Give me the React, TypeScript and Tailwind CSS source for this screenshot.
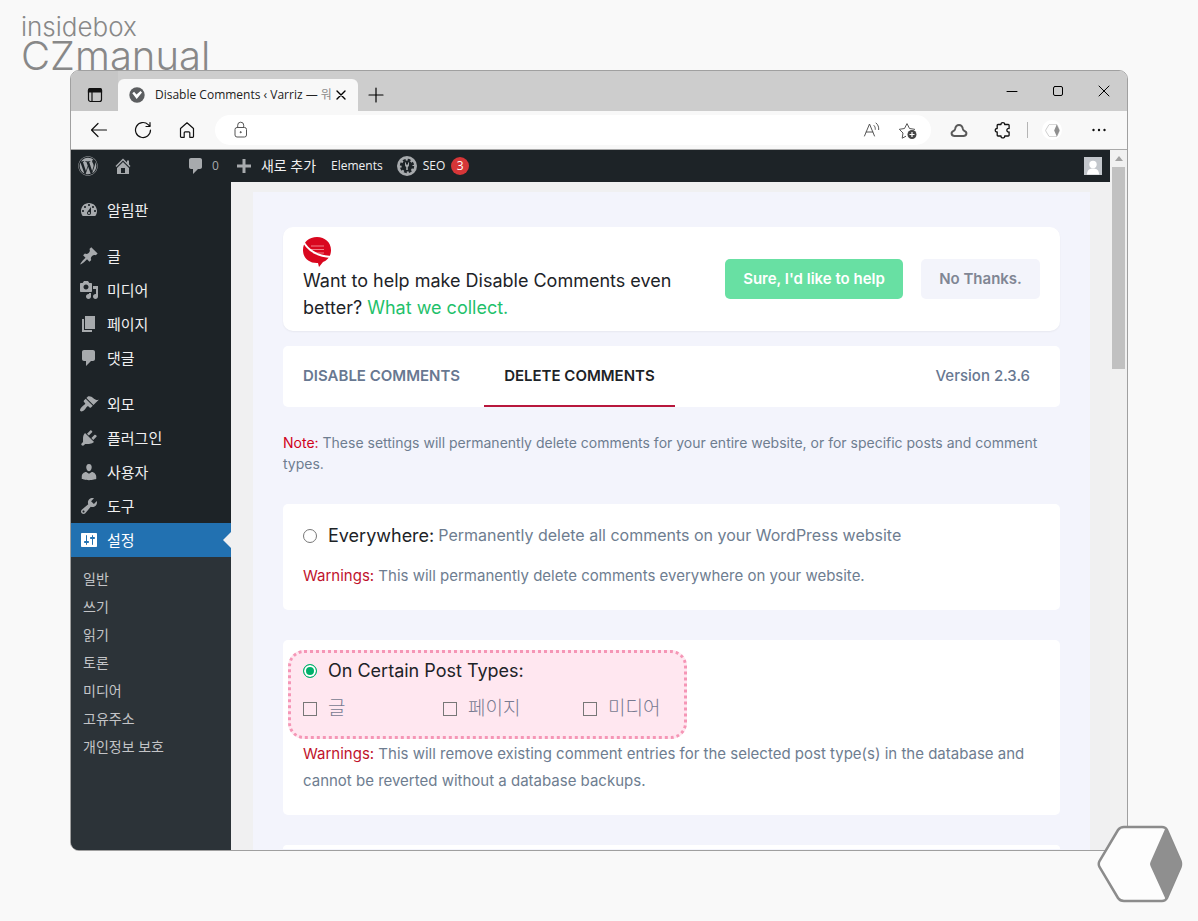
import React, { useState } from "react";
import { FaWordpress } from "react-icons/fa";

// 20x20 admin menu glyphs
const icons = {
  dashboard:
    "M3.76 16h12.48c1.1-1.37 1.76-3.11 1.76-5 0-4.42-3.58-8-8-8s-8 3.58-8 8c0 1.89.66 3.63 1.76 5zM10 4c.55 0 1 .45 1 1s-.45 1-1 1-1-.45-1-1 .45-1 1-1zM6 6c.55 0 1 .45 1 1s-.45 1-1 1-1-.45-1-1 .45-1 1-1zm8 0c.55 0 1 .45 1 1s-.45 1-1 1-1-.45-1-1 .45-1 1-1zm-5.37 5.55L12 7v6c0 1.1-.9 2-2 2s-2-.9-2-2c0-.57.24-1.08.63-1.45zM4 10c.55 0 1 .45 1 1s-.45 1-1 1-1-.45-1-1 .45-1 1-1zm12 0c.55 0 1 .45 1 1s-.45 1-1 1-1-.45-1-1 .45-1 1-1zm-5 3c0-.55-.45-1-1-1s-1 .45-1 1 .45 1 1 1 1-.45 1-1z",
  post: "M10.44 3.02l1.82-1.82 6.36 6.35-1.83 1.82c-1.05-.68-2.48-.57-3.41.36l-.75.75c-.92.93-1.04 2.35-.35 3.41l-1.83 1.82-2.41-2.41-2.8 2.79c-.42.42-3.38 2.71-3.8 2.29s1.86-3.39 2.28-3.81l2.79-2.79L4.1 9.36l1.83-1.82c1.05.69 2.48.57 3.4-.36l.75-.75c.93-.92 1.05-2.35.36-3.41z",
  media:
    "M13 11V4c0-.55-.45-1-1-1h-1.67L9 1H5L3.67 3H2c-.55 0-1 .45-1 1v7c0 .55.45 1 1 1h10c.55 0 1-.45 1-1zM7 4.5c1.38 0 2.5 1.12 2.5 2.5S8.38 9.5 7 9.5 4.5 8.38 4.5 7 5.62 4.5 7 4.5zM14 6h5v10.5c0 1.38-1.12 2.5-2.5 2.5S14 17.88 14 16.5s1.12-2.5 2.5-2.5c.17 0 .34.02.5.05V9h-3V6zm-4 8.05V13h2v3.5c0 1.38-1.12 2.5-2.5 2.5S7 17.88 7 16.5 8.12 14 9.5 14c.17 0 .34.02.5.05z",
  page: "M6 15V2h10v13H6zm-1 1h8v2H3V5h2v11z",
  comments:
    "M5 2h9c1.1 0 2 .9 2 2v7c0 1.1-.9 2-2 2h-2l-5 5v-5H5c-1.1 0-2-.9-2-2V4c0-1.1.9-2 2-2z",
  appearance:
    "M14.48 11.06L7.41 3.99l1.5-1.5c.5-.56 2.3-.47 3.51.32 1.21.8 1.43 1.28 2.91 2.1 1.18.64 2.45 1.26 4.45.85zm-.71.71L6.7 4.7 4.93 6.47c-.39.39-.39 1.02 0 1.41l1.06 1.06c.39.39.39 1.03 0 1.42-.6.6-1.43 1.11-2.21 1.69-.35.26-.7.53-1.01.84C1.43 14.23.4 16.08 1.4 17.07c.99 1 2.84-.03 4.18-1.36.31-.31.58-.66.85-1.02.57-.78 1.08-1.61 1.69-2.21.39-.39 1.02-.39 1.41 0l1.06 1.06c.39.39 1.02.39 1.41 0z",
  plugins:
    "M13.11 4.36L9.87 7.6 8 5.73l3.24-3.24c.35-.34 1.05-.2 1.56.32.52.51.66 1.21.31 1.55zm-8 1.77l.91-1.12 9.01 9.01-1.19.84c-.71.71-2.63 1.16-3.82 1.16H6.14L4.9 17.26c-.59.59-1.54.59-2.12 0-.59-.58-.59-1.53 0-2.12l1.24-1.24v-3.88c0-1.13.4-3.19 1.09-3.89zm7.26 3.97l3.24-3.24c.34-.35 1.04-.21 1.55.31.52.51.66 1.21.31 1.55l-3.24 3.25z",
  users:
    "M10 9.25c-2.27 0-2.73-3.44-2.73-3.44C7 4.02 7.82 2 9.97 2c2.16 0 2.98 2.02 2.71 3.81 0 0-.41 3.44-2.68 3.44zm0 2.57L12.72 10c2.39 0 4.52 2.33 4.52 4.53v2.49s-3.65 1.13-7.24 1.13c-3.65 0-7.24-1.13-7.24-1.13v-2.49c0-2.25 1.94-4.48 4.47-4.48z",
  tools:
    "M16.68 9.77c-1.34 1.34-3.3 1.67-4.95.99l-5.41 6.52c-.99.99-2.59.99-3.58 0s-.99-2.59 0-3.57l6.52-5.42c-.68-1.65-.35-3.61.99-4.95 1.28-1.28 3.12-1.62 4.72-1.06l-2.89 2.89 2.82 2.82 2.86-2.87c.53 1.58.18 3.39-1.08 4.65zM3.81 16.21c.4.39 1.04.39 1.43 0 .4-.4.4-1.04 0-1.43-.39-.4-1.03-.4-1.43 0-.39.39-.39 1.03 0 1.43z",
  settings:
    "M18 16V4c0-.55-.45-1-1-1H3c-.55 0-1 .45-1 1v12c0 .55.45 1 1 1h14c.55 0 1-.45 1-1zM8 11h1c.55 0 1 .45 1 1s-.45 1-1 1H8v1.5c0 .28-.22.5-.5.5s-.5-.22-.5-.5V13H6c-.55 0-1-.45-1-1s.45-1 1-1h1V5.5c0-.28.22-.5.5-.5s.5.22.5.5V11zm5-2h-1c-.55 0-1-.45-1-1s.45-1 1-1h1V5.5c0-.28.22-.5.5-.5s.5.22.5.5V7h1c.55 0 1 .45 1 1s-.45 1-1 1h-1v5.5c0 .28-.22.5-.5.5s-.5-.22-.5-.5V9z",
  home: "M16 8.5l1.53 1.53-1.06 1.06L10 4.6l-6.47 6.49-1.06-1.06L10 2.5l4 4v-2h2v4zm-6-2.46l6 5.99V18H4v-5.97zM12 17v-5H8v5h4z",
  plus: "M17 8.5v3h-5.5V17h-3v-5.500H3v-3h5.500V3h3v5.500H17z",
};

type IconName = keyof typeof icons;

const DashIcon = ({ name, size = 20 }: { name: IconName; size?: number }) => (
  <svg width={size} height={size} viewBox="0 0 20 20" fill="currentColor" className="shrink-0">
    <path fillRule={name === "home" ? "evenodd" : "nonzero"} d={icons[name]} />
  </svg>
);

const menuGroups: { icon: IconName; label: string }[][] = [
  [{ icon: "dashboard", label: "알림판" }],
  [
    { icon: "post", label: "글" },
    { icon: "media", label: "미디어" },
    { icon: "page", label: "페이지" },
    { icon: "comments", label: "댓글" },
  ],
  [
    { icon: "appearance", label: "외모" },
    { icon: "plugins", label: "플러그인" },
    { icon: "users", label: "사용자" },
    { icon: "tools", label: "도구" },
    { icon: "settings", label: "설정" },
  ],
];

const settingsMenu = ["일반", "쓰기", "읽기", "토론", "미디어", "고유주소", "개인정보 보호"];

const postTypes = ["글", "페이지", "미디어"];

const Line = ({ size, width = 1, children }: { size: number; width?: number; children: React.ReactNode }) => (
  <svg
    width={size}
    height={size}
    viewBox={`0 0 ${size} ${size}`}
    fill="none"
    stroke="currentColor"
    strokeWidth={width}
    strokeLinecap="round"
    strokeLinejoin="round"
  >
    {children}
  </svg>
);

const HexMark = ({ className }: { className: string }) => (
  <svg viewBox="0 0 86 78" className={className}>
    <path
      d="M27 2h38q3.500 0 5 3l13.500 31q1 3 0 6L70 73q-1.500 3-5 3H27q-4 0-6-3L2.500 42q-1.500-3 0-6L21 5q2-3 6-3z"
      fill="#fdfdfd"
      stroke="#8c8c8c"
      strokeWidth="2.500"
    />
    <path d="M68.500 3L84 36q1 3 0 6L69 75 53.500 41q-1-2 0-4z" fill="#8f8f8f" />
  </svg>
);

const TabStrip = () => (
  <div className="flex h-10 items-center bg-[#cdcdcd] text-black">
    <button aria-label="Tab actions" className="flex h-full w-[47px] shrink-0 items-center justify-center bg-[#c6c6c6] pt-2">
      <svg width="16" height="16" viewBox="0 0 16 16" fill="none" stroke="#111" strokeWidth="1.200">
        <rect x="1.500" y="1.500" width="13" height="13" rx="2" />
        <path d="M1.500 3a1.500 1.500 0 0 1 1.500-1.500h10A1.500 1.500 0 0 1 14.500 3v2h-13z" fill="#111" />
        <path d="M5 5v9.500" />
      </svg>
    </button>
    <div className="flex h-8 w-60 shrink-0 items-center self-end rounded-t-md bg-[#f8f8f8] pl-[11px]">
      <svg width="16" height="16" viewBox="0 0 16 16" className="shrink-0">
        <circle cx="8" cy="8" r="7.700" fill="#5c5e60" />
        <path d="M3.300 6.300l1.800-1.500 2.400 2.700L11.500 4l1.500 1.500-5.300 6.500z" fill="#fff" />
      </svg>
      <span className="ml-[10px] w-44 overflow-hidden whitespace-nowrap text-xs text-[#222]">
        Disable Comments ‹ Varriz — <span className="text-[#888]">워</span>
      </span>
      <button aria-label="Close tab" className="flex h-5 w-5 items-center justify-center">
        <Line size={10} width={1.4}>
          <path d="M1 1l8 8M9 1L1 9" />
        </Line>
      </button>
    </div>
    <button aria-label="New tab" className="flex w-9 shrink-0 items-center justify-center pt-2">
      <Line size={16} width={1.2}>
        <path d="M8 1v14M1 8h14" />
      </Line>
    </button>
    <div className="ml-auto flex">
      <button aria-label="Minimize" className="flex w-[46px] items-center justify-center">
        <Line size={12}>
          <path d="M1 6.500h10" />
        </Line>
      </button>
      <button aria-label="Maximize" className="flex w-[46px] items-center justify-center">
        <Line size={12}>
          <rect x="1.500" y="1.500" width="9" height="9" rx="1.500" />
        </Line>
      </button>
      <button aria-label="Close" className="flex w-[46px] items-center justify-center">
        <Line size={12}>
          <path d="M1 1l10 10M11 1L1 11" />
        </Line>
      </button>
    </div>
  </div>
);

const navButton = "flex h-8 w-11 shrink-0 items-center justify-center";

const Toolbar = () => (
  <div className="flex h-[39px] items-center border-b border-[#a9a9a9] bg-[#f8f8f8] px-[6px] text-[#111]">
    <button aria-label="Back" className={navButton}>
      <Line size={18} width={1.2}>
        <path d="M16.500 9h-15M8 2.500L1.500 9 8 15.500" />
      </Line>
    </button>
    <button aria-label="Refresh" className={navButton}>
      <Line size={18} width={1.2}>
        <path d="M16.500 9A7.500 7.500 0 1 1 14.200 3.600L16 5.400M16 1.500v4h-4" />
      </Line>
    </button>
    <button aria-label="Home" className={navButton}>
      <Line size={18} width={1.2}>
        <path d="M2.500 7.500L9 1.800l6.500 5.700v8a.8.8 0 0 1-.8.800h-2.900v-4.500a1 1 0 0 0-1-1H7.200a1 1 0 0 0-1 1v4.500H3.300a.8.8 0 0 1-.8-.8z" />
      </Line>
    </button>
    <div className="ml-[6px] flex h-[30px] min-w-0 flex-1 items-center rounded-full bg-white pl-[17px] pr-[5px] text-[#555]">
      <svg width="18" height="18" viewBox="0 0 18 18" fill="none" stroke="currentColor" className="shrink-0">
        <rect x="3" y="6.500" width="11.500" height="9.500" rx="2" />
        <path d="M5.700 6.500V4.200a3 3 0 0 1 6 0v2.300" />
        <circle cx="8.700" cy="11.200" r=".6" fill="currentColor" />
      </svg>
      <input aria-label="Address" className="h-full min-w-0 flex-1 bg-transparent px-2 text-sm outline-none" />
      <button aria-label="Read aloud" className="flex w-9 shrink-0 justify-center">
        <Line size={18} width={1}>
          <path d="M1.500 15L6.500 3l5 12M3.200 11h6.600M11 4.500c1 1 1.400 2.300 1.300 3.800M13 2c2 1.600 3 4 2.700 6.600" />
        </Line>
      </button>
      <button aria-label="Add to favorites" className="flex w-9 shrink-0 justify-center">
        <svg width="20" height="20" viewBox="0 0 20 20" fill="none" stroke="currentColor">
          <path d="M8 16.200l-3.800 2 .8-5.200-3.700-3.700 5.200-.8L9 3.600l2.500 4.900 5.200.8-1 1" strokeLinejoin="round" />
          <circle cx="14" cy="14.500" r="4.500" fill="#444" stroke="none" />
          <path d="M14 12v5M11.500 14.500h5" stroke="#fff" strokeWidth="1.200" />
        </svg>
      </button>
    </div>
    <button aria-label="Cloud" className={`${navButton} ml-[6px] text-[#5a5a5a]`}>
      <Line size={18} width={2}>
        <path d="M4.500 15c-3.300 0-3.800-3.600-1.300-4.800 1-.5 1.600-1.200 1.900-2.300 1-5.200 6.800-5.200 7.800 0 .3 1.100.9 1.800 1.900 2.300 2.500 1.200 2 4.800-1.300 4.800z" />
      </Line>
    </button>
    <button aria-label="Extensions" className={navButton}>
      <Line size={18} width={1.3}>
        <path d="M4 3.500h3c-.3-2.600 4-2.600 3.700 0h3.600a.8.8 0 0 1 .8.800v3.200c-3-.6-3 4 0 3.500v3.200a.8.8 0 0 1-.8.800h-3.600c.3 2.600-4 2.600-3.700 0H4a.8.8 0 0 1-.8-.8V11c-2.600.3-2.600-3.800 0-3.500V4.300a.8.8 0 0 1 .8-.8z" />
      </Line>
    </button>
    <span className="mx-[2px] h-4 w-px shrink-0 bg-[#b5b5b5]" />
    <button aria-label="Profile" className={navButton}>
      <span className="flex h-5 w-5 items-center justify-center rounded-full bg-white">
        <HexMark className="h-[13px] w-[15px]" />
      </span>
    </button>
    <button aria-label="More" className={`${navButton} ml-[3px]`}>
      <svg width="16" height="4" viewBox="0 0 16 4" fill="currentColor">
        <circle cx="2.500" cy="2" r="1.200" />
        <circle cx="8" cy="2" r="1.200" />
        <circle cx="13.500" cy="2" r="1.200" />
      </svg>
    </button>
  </div>
);

const AdminBar = () => (
  <nav className="flex h-8 shrink-0 items-center bg-[#1d2327] pl-[7px] pr-2 text-xs text-[#f0f0f1]">
    <a href="#wp" aria-label="WordPress" className="text-[#a7aaad]">
      <FaWordpress size={20} />
    </a>
    <a href="#home" aria-label="Home" className="ml-[15px] text-[#a7aaad]">
      <DashIcon name="home" />
    </a>
    <a href="#comments" className="ml-[53px] flex items-center gap-[6px] text-[#a7aaad]">
      <DashIcon name="comments" />
      <span>0</span>
    </a>
    <a href="#new" className="ml-[15px] flex items-center gap-[7px] text-sm">
      <span className="text-[#a7aaad]">
        <DashIcon name="plus" />
      </span>
      새로 추가
    </a>
    <a href="#elements" className="ml-[15px]">
      Elements
    </a>
    <a href="#seo" className="ml-[14px] flex items-center">
      <svg width="20" height="20" viewBox="0 0 20 20">
        <circle cx="10" cy="10" r="10" fill="#a7aaad" />
        <circle cx="10" cy="10" r="5.500" fill="#1d2327" />
        <circle cx="10" cy="10" r="6" fill="none" stroke="#1d2327" strokeWidth="2.400" strokeDasharray="2.700 2.012" />
        <path d="M8 6.500v2.700a2 2 0 0 0 1.200 1.800v3h1.600v-3A2 2 0 0 0 12 9.200V6.500h-1v2H9v-2z" fill="#a7aaad" />
      </svg>
      <span className="ml-[6px]">SEO</span>
      <span className="ml-[6px] flex h-[18px] w-[18px] items-center justify-center rounded-full bg-[#d63638] text-xs text-white">
        3
      </span>
    </a>
    <a href="#profile" aria-label="Profile" className="ml-auto">
      <svg width="18" height="18" viewBox="0 0 18 18">
        <rect width="18" height="18" fill="#c3c7cc" />
        <circle cx="9" cy="7.500" r="3.700" fill="#fff" />
        <path d="M3 17.500c0-4 2-6 6-6s6 2 6 6z" fill="#fff" />
      </svg>
    </a>
  </nav>
);

const Sidebar = () => (
  <aside className="flex w-40 shrink-0 flex-col bg-[#1d2327] pt-[11px]">
    <ul className="flex flex-col gap-3">
      {menuGroups.map((group, i) => (
        <li key={i}>
          <ul>
            {group.map((item) => {
              const current = item.icon === "settings";
              return (
                <li key={item.icon}>
                  <a
                    href={`#${item.icon}`}
                    className={`relative flex h-[34px] items-center gap-2 pl-2 text-[15px] ${current ? "bg-[#2271b1] text-white" : "text-[#f0f0f1]"}`}
                  >
                    <span className={current ? "text-white" : "text-[#a7aaad]"}>
                      <DashIcon name={item.icon} />
                    </span>
                    {item.label}
                    {current && (
                      <span className="absolute right-0 top-[9px] border-y-8 border-r-8 border-y-transparent border-r-[#f0f0f1]" />
                    )}
                  </a>
                </li>
              );
            })}
          </ul>
        </li>
      ))}
    </ul>
    <ul className="flex-1 bg-[#2c3338] pt-2">
      {settingsMenu.map((label) => (
        <li key={label}>
          <a href="#sub" className="flex h-7 items-center pl-3 text-sm text-[#c3c4c7]">
            {label}
          </a>
        </li>
      ))}
    </ul>
  </aside>
);

const HelpNotice = () => (
  <section className="flex items-center rounded-[10px] bg-white px-5 py-[10px] shadow-xs">
    <div className="min-w-0 flex-1">
      <svg width="28" height="30" viewBox="0 0 28 30" className="block">
        <path d="M14 0c8 0 14 5.500 14 13 0 6-3 10-8 12l-4 5-1-4C6 26.500 0 21 0 13S6 0 14 0z" fill="#d9071f" />
        <path d="M8 9h13M8 12.500h13M10 16h11" stroke="#f2808b" strokeWidth="1" />
        <path d="M0 4c4 8 13 15 28 16" fill="none" stroke="#fff" strokeWidth="2" />
      </svg>
      <p className="text-lg leading-[27px] text-[#1d2327]">
        Want to help make Disable Comments even
        <br />
        better?{" "}
        <a href="#collect" className="text-[#1fc16b]">
          What we collect.
        </a>
      </p>
    </div>
    <button className="h-10 w-[178px] rounded-[5px] bg-[#68e0a3] text-[15px] font-semibold text-white">
      Sure, I'd like to help
    </button>
    <button className="ml-[18px] h-10 w-[119px] rounded-[5px] bg-[#f3f4fb] text-[15px] font-semibold text-[#808694]">
      No Thanks.
    </button>
  </section>
);

const radioStyle =
  "h-[14px] w-[14px] shrink-0 appearance-none rounded-full border border-[#777] bg-white checked:border-[#00b06a] checked:bg-[#00b06a] checked:shadow-[inset_0_0_0_2px_#fff]";

const App = () => {
  const [mode, setMode] = useState("types");

  return (
    <div className="relative flex min-h-screen flex-col bg-[#f9f9f9] pb-[70px] font-['Open_Sans','Noto_Sans_CJK_KR',sans-serif]">
      <header className="flex h-[70px] flex-col pl-[21px] pt-[14px] font-['Inter',sans-serif] font-light text-[#888]">
        <span className="text-[26px] leading-[26px]">insidebox</span>
        <span className="text-[40px] leading-[32px]">CZmanual</span>
      </header>

      <div className="relative mx-[70px] flex flex-1 flex-col overflow-hidden rounded-[9px] border border-[#a0a0a0] bg-[#f0f0f1]">
        <TabStrip />
        <Toolbar />
        <div className="flex flex-1">
          <div className="flex min-w-0 flex-1 flex-col">
            <AdminBar />
            <div className="flex flex-1">
              <Sidebar />
              <main className="flex min-w-0 flex-1 flex-col pl-[22px] pr-5 pt-[10px] font-['Inter','Noto_Sans_CJK_KR',sans-serif]">
                <div className="flex-1 bg-[#f3f4fc] px-[30px] pt-[35px]">
                  <HelpNotice />

                  <div className="mt-[15px] flex h-[61px] rounded-[5px] bg-white pr-[30px] text-[15px] font-semibold">
                    <button className="pl-5 pr-6 text-[#687891]">DISABLE COMMENTS</button>
                    <button className="border-b-2 border-[#b8173c] px-5 pt-[2px] text-[#1d2327]">
                      DELETE COMMENTS
                    </button>
                    <span className="ml-auto self-center font-medium text-[#687891]">Version 2.3.6</span>
                  </div>

                  <p className="mt-[25px] text-sm leading-[21px] text-[#6e7d90]">
                    <span className="text-[#d0021b]">Note:</span> These settings will permanently delete comments for
                    your entire website, or for specific posts and comment types.
                  </p>

                  <section className="mt-[30px] rounded-[5px] bg-white px-5 pb-5 pt-[18px]">
                    <label className="flex items-center text-base leading-[27px] text-[#6e7d90]">
                      <input
                        type="radio"
                        name="mode"
                        checked={mode === "all"}
                        onChange={() => setMode("all")}
                        className={radioStyle}
                      />
                      <span className="ml-[11px] mr-1 text-lg leading-[27px] text-[#1d2327]">Everywhere:</span>
                      Permanently delete all comments on your WordPress website
                    </label>
                    <p className="mt-[13px] pb-px text-[15px] leading-[27px] text-[#6e7d90]">
                      <span className="text-[#c0122c]">Warnings:</span> This will permanently delete comments everywhere
                      on your website.
                    </p>
                  </section>

                  <section className="mt-[30px] rounded-[5px] bg-white px-5 pb-[21px] pt-[10px]">
                    <div className="-ml-[15px] w-[399px] rounded-2xl border-[3px] border-dotted border-[#f596b6] bg-[#ffe7f0] px-3 pb-[10px] pt-1">
                      <label className="flex items-center text-lg leading-[27px] text-[#1d2327]">
                        <input
                          type="radio"
                          name="mode"
                          checked={mode === "types"}
                          onChange={() => setMode("types")}
                          className={radioStyle}
                        />
                        <span className="ml-[11px]">On Certain Post Types:</span>
                      </label>
                      <div className="mt-[7px] flex">
                        {postTypes.map((type) => (
                          <label
                            key={type}
                            className="flex w-[140px] shrink-0 items-center gap-[11px] text-[19px] font-light leading-[35px] text-[#777a90]"
                          >
                            <input
                              type="checkbox"
                              className="h-[14px] w-[14px] shrink-0 appearance-none border border-[#777] bg-transparent checked:bg-[#00b06a]"
                            />
                            {type}
                          </label>
                        ))}
                      </div>
                    </div>
                    <p className="mt-px text-[15px] leading-[27px] text-[#6e7d90]">
                      <span className="text-[#c0122c]">Warnings:</span> This will remove existing comment entries for
                      the selected post type(s) in the database and cannot be reverted without a database backups.
                    </p>
                  </section>

                  <section className="mt-[30px] h-1 rounded-t-[5px] bg-white" />
                </div>
              </main>
            </div>
          </div>

          {/* scrollbar */}
          <div className="flex w-[17px] shrink-0 flex-col items-center bg-[#f1f1f1]">
            <span className="mb-[6px] mt-[6px] border-x-4 border-b-5 border-x-transparent border-b-[#a3a3a3]" />
            <span className="h-[202px] w-[13px] bg-[#c1c1c1]" />
          </div>
        </div>
      </div>

      <HexMark className="absolute bottom-[18px] right-[15px] h-[78px] w-[86px]" />
    </div>
  );
};

export default App;
